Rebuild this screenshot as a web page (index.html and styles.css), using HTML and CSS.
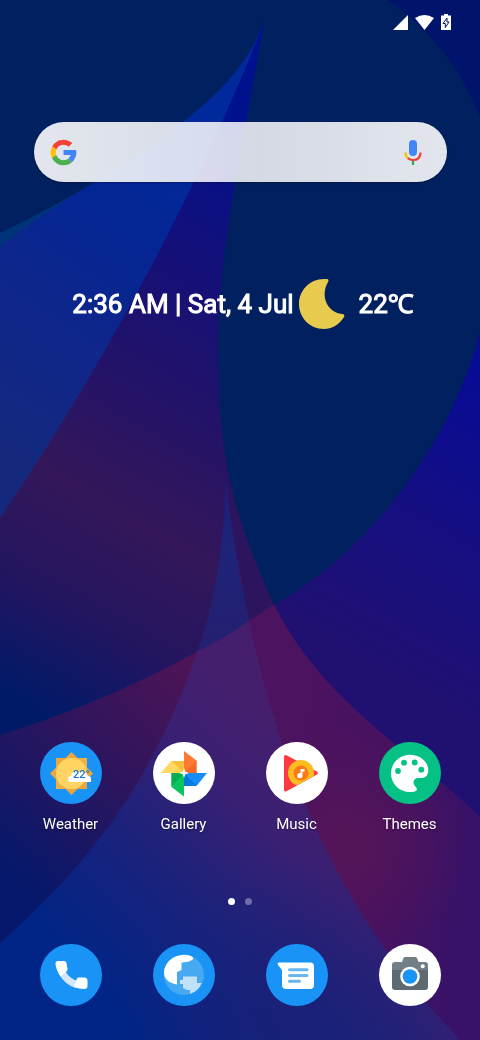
FILE: index.html
```html
<!DOCTYPE html>
<html lang="en">
<head>
    <meta charset="UTF-8">
    <meta name="viewport" content="width=device-width, initial-scale=1.0">
    <title>Home screen</title>
    <link rel="stylesheet" href="styles.css">
</head>
<body>
    <svg class="wallpaper" viewBox="0 0 480 1040" preserveAspectRatio="xMidYMid slice" aria-hidden="true">
        <defs>
            <linearGradient id="right" gradientUnits="userSpaceOnUse" x1="480" y1="380" x2="330" y2="640">
                <stop offset="0" stop-color="#080b94"/><stop offset=".5" stop-color="#160f82"/><stop offset="1" stop-color="#1f1071"/>
            </linearGradient>
            <linearGradient id="petal" gradientUnits="userSpaceOnUse" x1="300" y1="160" x2="0" y2="690">
                <stop offset="0" stop-color="#00118e"/><stop offset=".2" stop-color="#12107c"/><stop offset=".42" stop-color="#21126a"/><stop offset=".65" stop-color="#34175a"/><stop offset=".82" stop-color="#241560"/><stop offset="1" stop-color="#001a68"/>
            </linearGradient>
            <linearGradient id="low" gradientUnits="userSpaceOnUse" x1="20" y1="880" x2="210" y2="680">
                <stop offset="0" stop-color="#06186b"/><stop offset=".5" stop-color="#2c155e"/><stop offset="1" stop-color="#4f1456"/>
            </linearGradient>
            <linearGradient id="lowRight" gradientUnits="userSpaceOnUse" x1="300" y1="790" x2="470" y2="800">
                <stop offset="0" stop-color="#4c1360"/><stop offset=".45" stop-color="#471262"/><stop offset="1" stop-color="#371268"/>
            </linearGradient>
            <radialGradient id="glow" gradientUnits="userSpaceOnUse" cx="350" cy="845" r="120">
                <stop offset="0" stop-color="#561456" stop-opacity=".9"/><stop offset="1" stop-color="#561456" stop-opacity="0"/>
            </radialGradient>
            <linearGradient id="blue" gradientUnits="userSpaceOnUse" x1="220" y1="120" x2="0" y2="440">
                <stop offset="0" stop-color="#00299b"/><stop offset=".4" stop-color="#052693"/><stop offset=".7" stop-color="#10268a"/><stop offset="1" stop-color="#14297e"/>
            </linearGradient>
            <linearGradient id="center" gradientUnits="userSpaceOnUse" x1="80" y1="970" x2="300" y2="750">
                <stop offset="0" stop-color="#002586"/><stop offset=".4" stop-color="#1a227c"/><stop offset=".75" stop-color="#3a2073"/><stop offset="1" stop-color="#461e6e"/>
            </linearGradient>
            <radialGradient id="shade" gradientUnits="userSpaceOnUse" cx="300" cy="1050" r="190">
                <stop offset="0" stop-color="#192077" stop-opacity=".9"/><stop offset="1" stop-color="#192077" stop-opacity="0"/>
            </radialGradient>
            <linearGradient id="tip" gradientUnits="userSpaceOnUse" x1="0" y1="475" x2="0" y2="650">
                <stop offset="0" stop-color="#1a1f75"/><stop offset=".4" stop-color="#1e247a"/><stop offset="1" stop-color="#251f70"/>
            </linearGradient>
        </defs>
        <rect width="480" height="1040" fill="#00205f"/>
        <path d="M388 0C428 28 461 67 480 118V0z" fill="#00146c"/>
        <path d="M480 332C455 430 380 545 274 605L300 760L480 850z" fill="url(#right)"/>
        <path d="M0 247Q45 210 93 183Q140 155 183 122C218 94 248 65 264 22C250 110 218 240 218 350C218 460 235 520 274 605C200 655 100 705 0 735z" fill="url(#petal)"/>
        <path d="M226 475Q228 510 250 621L274 605Q238 530 226 475z" fill="#2c145f"/>
        <path d="M0 735C100 705 200 655 274 605C322 700 400 742 480 817V1040H0z" fill="url(#low)"/>
        <path d="M249 621L274 605C322 700 400 742 480 817V1040H460C350 925 285 790 249 621z" fill="url(#lowRight)"/>
        <path d="M249 621L274 605C322 700 400 742 480 817V1040H460C350 925 285 790 249 621z" fill="url(#glow)"/>
        <path d="M0 233Q50 209 93 183Q45 213 0 247z" fill="#00347a"/>
        <path d="M0 247Q45 212 93 183Q140 155 183 122C218 94 248 65 264 22C205 175 105 365 0 518z" fill="url(#blue)"/>
        <path d="M226 475Q224 580 197 652Q225 638 249 621Q228 520 226 475z" fill="url(#tip)"/>
        <path d="M197 652Q225 638 249 621C285 790 350 925 460 1040H0V943C95 860 155 775 197 652z" fill="url(#center)"/>
        <path d="M197 652Q225 638 249 621C285 790 350 925 460 1040H0V943C95 860 155 775 197 652z" fill="url(#shade)"/>
    </svg>

    <div class="screen">
        <header class="status-bar">
            <svg width="15" height="15" viewBox="0 0 15 15" role="img" aria-label="Signal"><path d="M15 0v15H0z" fill="#fff"/></svg>
            <svg width="19" height="15" viewBox="0 0 19 15" role="img" aria-label="Wi-Fi"><path d="M0 3Q9.500-3 19 3L9.500 15z" fill="#fff"/></svg>
            <svg width="10" height="16" viewBox="0 0 10 16" role="img" aria-label="Battery charging"><path d="M3 0h4v1.500h3V16H0V1.500h3z" fill="#fff"/><path d="M6 4L2 9.500h2.300V13.500L8 8H6z" fill="#fff" stroke="#00146c" stroke-width="1"/></svg>
        </header>

        <form class="search">
            <svg width="27" height="27" viewBox="3 3 42 42" role="img" aria-label="Google">
                <path fill="#f44336" d="M6.300 14.700l6.600 4.800C14.700 15.100 19 12 24 12c3.100 0 5.800 1.200 8 3l5.700-5.700C34 6.100 29.300 4 24 4 16.300 4 9.700 8.300 6.300 14.700z"/>
                <path fill="#ffc107" d="M6.300 14.700A20 20 0 0 0 6.200 33.200l6.500-5A12 12 0 0 1 12.900 19.500z"/>
                <path fill="#4caf50" d="M24 44c5.200 0 9.900-2 13.400-5.200l-6.200-5.200A12 12 0 0 1 12.700 28l-6.500 5.100C9.500 39.600 16.200 44 24 44z"/>
                <path fill="#4285f4" d="M43.600 20H24v8h11.300a12 12 0 0 1-4.100 5.600l6.200 5.200C37 39.200 44 34 44 24c0-1.300-.1-2.700-.4-4z"/>
            </svg>
            <input type="text" aria-label="Search">
            <button type="button" class="mic" aria-label="Voice search">
                <svg width="18" height="25" viewBox="0 0 18 25" fill="none">
                    <rect x="5" y="0" width="8" height="16" rx="4" fill="#4285f4"/>
                    <path d="M9 20v5" stroke="#34a853" stroke-width="2.200"/>
                    <path d="M1.500 12.500Q1.500 16.500 4 18.500" stroke="#fbbc05" stroke-width="2.200"/>
                    <path d="M3.800 18.200Q6 20 9 20Q16.500 20 16.500 12.500" stroke="#ea4335" stroke-width="2.200"/>
                </svg>
            </button>
        </form>

        <section class="glance">
            <span>2:36 AM | Sat, 4 Jul</span>
            <svg width="46" height="50" viewBox="0 0 46 50" role="img" aria-label="Clear night"><path d="M25 0H28C29.500 0 30 1.500 29 3C21 17 28 33 43 35C45 35 46 36 45 38C40 46 33 50 25 50C10 50 0 38 0 25S10 0 25 0z" fill="#e7ca4e"/></svg>
            <span class="temp">22℃</span>
        </section>

        <nav class="apps" aria-label="Apps">
            <button class="app">
                <svg viewBox="0 0 62 62" aria-hidden="true">
                    <circle cx="31" cy="31" r="31" fill="#1994f6"/>
                    <path d="M31.500 10L53 31.500L31.500 53L10 31.500z" fill="#eda63f"/>
                    <path d="M16 16h31v31H16z" fill="#f2ae46"/>
                    <path d="M16 16h12l-12 12zM47 47H35l12-12z" fill="#eda63f"/>
                    <circle cx="31.500" cy="31.500" r="15.500" fill="#ffd462"/>
                    <path d="M31 40a3 3 0 0 1 0-6a5 5 0 0 1 8-4a7 7 0 0 1 9 4a3 3 0 0 1 3 3v3z" fill="#fff"/>
                    <text x="33" y="36" class="degrees">22°</text>
                </svg>
                <span>Weather</span>
            </button>
            <button class="app">
                <svg viewBox="0 0 62 62" aria-hidden="true">
                    <circle cx="31" cy="31" r="31" fill="#fff"/>
                    <path d="M8 31L18.500 19H31v12z" fill="#fdd34d"/>
                    <path d="M18.500 19L31 31V19z" fill="#f6bf3c"/><path d="M18.500 19L8 31h12l6-5z" fill="#ffd95f"/>
                    <path d="M31 9l12.500 9.500V31H31z" fill="#ff7a33"/>
                    <path d="M43.500 18.500V31H31z" fill="#f36b28"/>
                    <path d="M31 31h23L43.500 44H31z" fill="#148dfa"/>
                    <path d="M31 31l12.500 13H31z" fill="#0879dc"/>
                    <path d="M18.500 31H31v23.500L18.500 45z" fill="#08c55e"/>
                    <path d="M18.500 31v13.500L31 31z" fill="#08ad53"/>
                    <path d="M31 26l1.300 3.700L36 31l-3.700 1.300L31 36l-1.300-3.700L26 31l3.700-1.300z" fill="#fff"/>
                </svg>
                <span>Gallery</span>
            </button>
            <button class="app">
                <svg viewBox="0 0 62 62" aria-hidden="true">
                    <clipPath id="play"><path d="M0 0H62V26L18 50.500L0 62z"/></clipPath>
                    <circle cx="31" cy="31" r="31" fill="#fff"/>
                    <path d="M18 15Q18 12 21 13.500L50 29Q54 31 50 33L21 49Q18 50.500 18 48z" fill="#fc3a3f"/>
                    <g clip-path="url(#play)"><circle cx="35" cy="31" r="13" fill="#fdbd21"/></g>
                    <circle cx="35" cy="31" r="7.500" fill="#fb7a17"/>
                    <path d="M34.500 27h4v2.500h-2V33.500a2.600 2.600 0 1 1-2-2.500z" fill="#fff"/>
                </svg>
                <span>Music</span>
            </button>
            <button class="app">
                <svg viewBox="0 0 62 62" aria-hidden="true">
                    <circle cx="31" cy="31" r="31" fill="#05c186"/>
                    <path d="M31 12.700C20.500 12.700 12 21 12 31.500S20.500 50 31 50C36 50.500 39 48.500 37.500 46C36 43.500 34.500 43 34.500 40.500C34.500 37.500 36.500 36 39 36H42.500C47 36 49.300 32.500 49.300 28.500C49.300 19.500 41 12.700 31 12.700z" fill="#fff"/>
                    <g fill="#05c186"><circle cx="19" cy="29" r="2.900"/><circle cx="25" cy="20.700" r="2.900"/><circle cx="35.700" cy="20.500" r="2.900"/><circle cx="42.300" cy="27.700" r="2.900"/></g>
                </svg>
                <span>Themes</span>
            </button>
        </nav>

        <div class="pages" aria-label="Page 1 of 2">
            <i class="dot active"></i>
            <i class="dot"></i>
        </div>

        <nav class="dock" aria-label="Dock">
            <button class="app" aria-label="Phone">
                <svg viewBox="0 0 62 62">
                    <circle cx="31" cy="31" r="31" fill="#1994f6"/>
                    <path d="M19 30Q25 41 36 44L38 37Q30 35 25 27z" fill="#d5e5fb"/>
                    <path d="M18 17H24Q26 17 26.500 19L27.500 25Q27.500 27 26 28L20.500 32.500Q16 26 15.500 20Q15.500 17 18 17z" fill="#fff"/>
                    <path d="M38 33.500H45Q47 33.500 47.500 36V42Q47.500 45 44 45Q39 45 34 43L37 34.500z" fill="#fff"/>
                </svg>
            </button>
            <button class="app" aria-label="Browser">
                <svg viewBox="0 0 62 62">
                    <circle cx="31" cy="31" r="31" fill="#1994f6"/>
                    <circle cx="31" cy="31" r="20" fill="#46a9f1"/>
                    <path d="M24 40.500C15 39 11 34 11 29A20 18 0 0 1 38 12Q42 14 39 16Q36 18 28.500 18.500V26L24 28z" fill="#fff"/>
                    <path d="M27 36h3v-3.500h14V39h4.800A20 20 0 0 1 37 50V46h-3l-4-2v-4h-3z" fill="#bfe1fa"/>
                </svg>
            </button>
            <button class="app" aria-label="Messages">
                <svg viewBox="0 0 62 62">
                    <circle cx="31" cy="31" r="31" fill="#1994f6"/>
                    <path d="M13 18.500H44Q48 18.500 48 22.500V41Q48 45 44 45H20Q16 45 16 41V26L12 21Q11 18.500 13 18.500z" fill="#fff"/>
                    <path d="M23.500 25.700H41M23.500 31.500H41M23.500 37.200H33.500" stroke="#69b5ee" stroke-width="3" stroke-linecap="round"/>
                </svg>
            </button>
            <button class="app" aria-label="Camera">
                <svg viewBox="0 0 62 62">
                    <circle cx="31" cy="31" r="31" fill="#fff"/>
                    <path d="M13 26V21Q13 18 16 18H23L24.500 14Q25 13 26 13H36Q37.500 13 38 14L39.500 18H46Q49 18 49 21V26z" fill="#737f86"/>
                    <path d="M13 26H49V43Q49 46 46 46H16Q13 46 13 43z" fill="#5d6a71"/>
                    <circle cx="31" cy="32.500" r="9.800" fill="#fff"/>
                    <circle cx="31" cy="32.500" r="7.300" fill="#1994f6"/>
                    <circle cx="43.700" cy="22.300" r="2" fill="#fff"/>
                </svg>
            </button>
        </nav>
    </div>
</body>
</html>
```
FILE: styles.css
```css
* { box-sizing: border-box; }
body { margin: 0; background: #00205f; color: #fff; font-family: Roboto, "Noto Sans", sans-serif; }
button { padding: 0; border: none; background: none; color: inherit; font: inherit; cursor: pointer; }
svg { display: block; flex-shrink: 0; }

.wallpaper { position: fixed; top: 0; left: 0; width: 100%; height: 100%; z-index: -1; }
.screen { display: flex; flex-direction: column; min-height: 100vh; padding-bottom: 34px; }

.status-bar { display: flex; justify-content: flex-end; align-items: center; gap: 7px; padding: 14px 29px 0 0; }

.search { display: flex; align-items: center; height: 60px; margin: 92px 33px 0 34px; padding: 0 25px 0 16px; border-radius: 30px; background: linear-gradient(90deg, rgba(255,255,255,0.89), rgba(255,255,255,0.83) 55%, rgba(255,255,255,0.89)); box-shadow: 0 1px 2px rgba(0,0,0,0.3); }
.search input { flex: 1; min-width: 0; height: 40px; padding: 0 12px; border: none; outline: none; background: transparent; font: inherit; }
.mic { display: block; }

.glance { display: flex; justify-content: center; align-items: center; gap: 5px; margin-top: 97px; padding-left: 6px; font-size: 26px; line-height: 32px; white-space: nowrap; -webkit-text-stroke: 1px #fff; }
.temp { margin-left: 9px; }

.apps, .dock { display: grid; grid-template-columns: repeat(4, 1fr); padding: 0 14px; }
.apps { margin-top: auto; }
.app { display: flex; flex-direction: column; align-items: center; gap: 10px; font-size: 15px; line-height: 20px; text-shadow: 0 1px 2px rgba(0,0,0,0.4); }
.app svg { width: 62px; height: 62px; }
.degrees { fill: #1976d2; font-size: 11px; font-weight: 500; text-shadow: none; }

.pages { display: flex; justify-content: center; gap: 10px; margin: 64px 0 39px; }
.dot { width: 7px; height: 7px; border-radius: 50%; background: rgba(255,255,255,0.35); }
.dot.active { background: #fff; }
```
